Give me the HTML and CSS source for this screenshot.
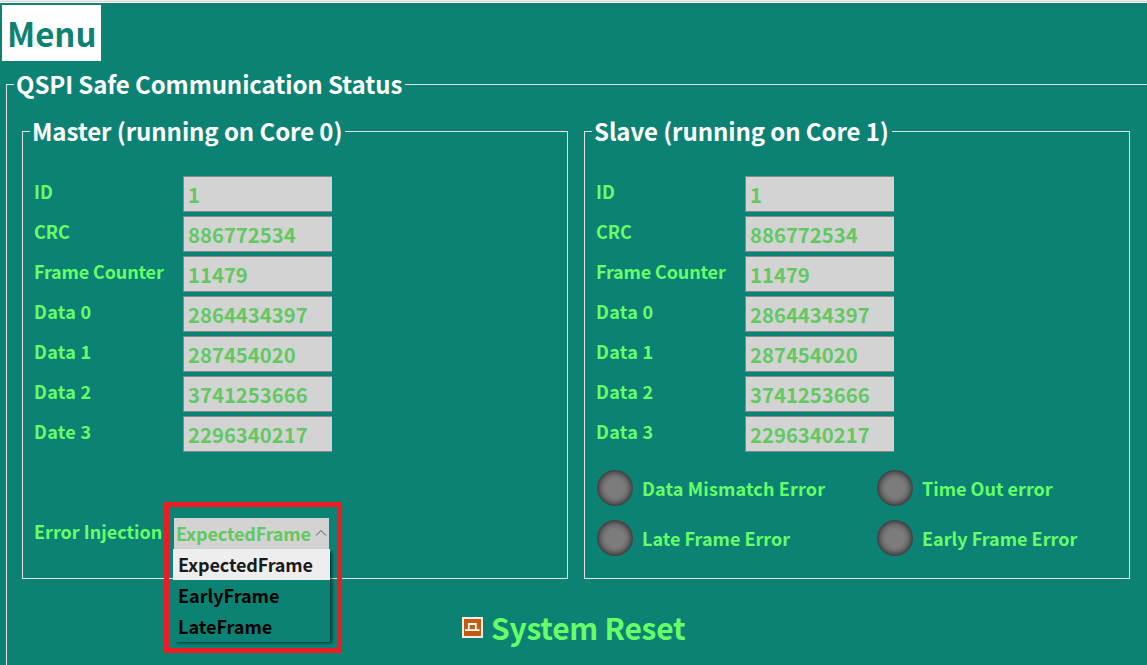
FILE: index.html
```html
<!DOCTYPE html>
<html lang="en">
<head>
<meta charset="utf-8">
<title>QSPI Safe Communication</title>
<link rel="stylesheet" href="styles.css">
</head>
<body>
<header class="topbar"><button class="menu-button">Menu</button></header>
<fieldset class="group status">
  <legend><span>QSPI Safe Communication Status</span></legend>
  <div class="panels">
    <fieldset class="group panel">
      <legend><span>Master (running on Core 0)</span></legend>
      <div class="rows">
        <div class="row"><span class="label">ID</span><span class="field">1</span></div>
        <div class="row"><span class="label">CRC</span><span class="field">886772534</span></div>
        <div class="row"><span class="label tight">Frame Counter</span><span class="field">11479</span></div>
        <div class="row"><span class="label wide">Data 0</span><span class="field">2864434397</span></div>
        <div class="row"><span class="label wide">Data 1</span><span class="field">287454020</span></div>
        <div class="row"><span class="label wide">Data 2</span><span class="field">3741253666</span></div>
        <div class="row"><span class="label wide">Date 3</span><span class="field">2296340217</span></div>
      </div>
      <div class="injection">
        <span class="label">Error Injection</span>
        <div class="combo">
          <div class="combo-value"><span class="tight">ExpectedFrame</span>
            <svg width="12" height="8" viewBox="0 0 12 8"><path d="M1 6.5 6 1.5l5 5" fill="none" stroke="#555" stroke-width="1"/></svg>
          </div>
          <ul class="combo-list">
            <li class="selected tight">ExpectedFrame</li>
            <li>EarlyFrame</li>
            <li>LateFrame</li>
          </ul>
          <div class="highlight"></div>
        </div>
      </div>
    </fieldset>
    <fieldset class="group panel">
      <legend><span>Slave (running on Core 1)</span></legend>
      <div class="rows">
        <div class="row"><span class="label">ID</span><span class="field">1</span></div>
        <div class="row"><span class="label">CRC</span><span class="field">886772534</span></div>
        <div class="row"><span class="label tight">Frame Counter</span><span class="field">11479</span></div>
        <div class="row"><span class="label wide">Data 0</span><span class="field">2864434397</span></div>
        <div class="row"><span class="label wide">Data 1</span><span class="field">287454020</span></div>
        <div class="row"><span class="label wide">Data 2</span><span class="field">3741253666</span></div>
        <div class="row"><span class="label wide">Data 3</span><span class="field">2296340217</span></div>
      </div>
      <div class="leds">
        <div class="led"><i class="lamp"></i><span class="airy">Data Mismatch Error</span></div>
        <div class="led"><i class="lamp"></i><span>Time Out error</span></div>
        <div class="led"><i class="lamp"></i><span>Late Frame Error</span></div>
        <div class="led"><i class="lamp"></i><span>Early Frame Error</span></div>
      </div>
    </fieldset>
  </div>
  <div class="reset">
    <svg width="21" height="21" viewBox="0 0 21 21"><path fill="#f4ece6" d="M0 0h21v21H0z"/><path fill="#c55a11" d="M2 2h17v17H2z"/><path d="M3 13.2h14.5M6.8 13V7h7v6" fill="none" stroke="#fff" stroke-width="1.8"/></svg>
    <span>System Reset</span>
  </div>
</fieldset>
</body>
</html>
```
FILE: styles.css
```css
* { box-sizing: border-box; }
body {
  margin: 0;
  height: 665px;
  overflow: hidden;
  background: #0c8275;
  color: #66ff66;
  font-family: "Noto Sans CJK SC", "Open Sans", sans-serif;
  font-weight: 700;
}
.topbar {
  height: 68px;
  padding: 2px 0 0 2px;
  background: linear-gradient(#ececec 0 1px, #d4d4d4 1px 2px, #fff 2px 3px, transparent 3px);
  border-top: 3px solid transparent;
  background-origin: border-box;
}
.menu-button {
  display: block;
  width: 99px;
  height: 56px;
  padding: 0 0 0 5px;
  border: 0;
  background: #fff;
  color: #0c8275;
  font: inherit;
  font-size: 33px;
  line-height: 56px;
  text-align: left;
}
.group { margin: 0; padding: 0; border: 1px solid #e3e3e3; min-width: 0; }
.group > legend {
  margin-left: 7px;
  padding: 0 3px 0 2px;
  color: #fff;
  font-size: 24px;
  letter-spacing: -0.1px;
  line-height: 33px;
  white-space: nowrap;
}
.group > legend span { position: relative; top: -1px; }
.status { margin-left: 6px; width: 1160px; height: 620px; }
.panels { display: flex; gap: 16px; padding: 14px 0 0 15px; }
.panel { width: 546px; height: 464px; }
.rows { display: flex; flex-direction: column; gap: 4px; padding: 28px 0 0 11px; }
.row { display: flex; height: 36px; }
.label { width: 149px; font-size: 18px; line-height: 30px; white-space: nowrap; }
.tight { letter-spacing: -0.15px; }
.wide { letter-spacing: 0.3px; }
.airy { letter-spacing: 0.15px; }
.field {
  width: 149px;
  padding-left: 4px;
  border: 1px solid #888;
  border-right: 0;
  background: #d3d3d3;
  color: #62c962;
  font-size: 20.3px;
  line-height: 34px;
}
.injection { display: flex; padding: 66px 0 0 11px; }
.injection .label { width: 140px; line-height: 27px; }
.combo { position: relative; width: 155px; font-size: 18px; line-height: 31px; }
.combo-value {
  display: flex;
  align-items: center;
  height: 31px;
  padding-left: 2px;
  gap: 4px;
  background: #d3d3d3;
  color: #62c962;
}
.combo-value svg { margin-top: -2px; }
.combo-list {
  position: absolute;
  left: -1px;
  top: 31px;
  width: 157px;
  margin: 0;
  padding: 0;
  list-style: none;
  background: #0c8275;
  color: #000;
  box-shadow: 3px 2px 3px -1px rgba(0, 0, 0, .6);
}
.combo-list li { height: 31px; padding-left: 5px; }
.combo-list .selected { background: #eee; color: #1a1a1a; }
.highlight {
  position: absolute;
  left: -10px;
  top: -16px;
  width: 178px;
  height: 151px;
  border: 5px solid #ed1c24;
}
.leds {
  display: grid;
  grid-template-columns: 280px 240px;
  grid-auto-rows: 36px;
  row-gap: 14px;
  padding: 18px 0 0 12px;
}
.led { display: flex; gap: 9px; font-size: 18px; line-height: 36px; white-space: nowrap; }
.lamp {
  width: 36px;
  height: 36px;
  border-radius: 50%;
  background: radial-gradient(circle closest-side, #7c7c7c 0 50%, #6c6c6c 72%, #484848 94%, #404040);
}
.reset { display: flex; align-items: center; gap: 8px; padding: 27px 0 0 455px; font-size: 30px; letter-spacing: -0.25px; line-height: 42px; }
```
